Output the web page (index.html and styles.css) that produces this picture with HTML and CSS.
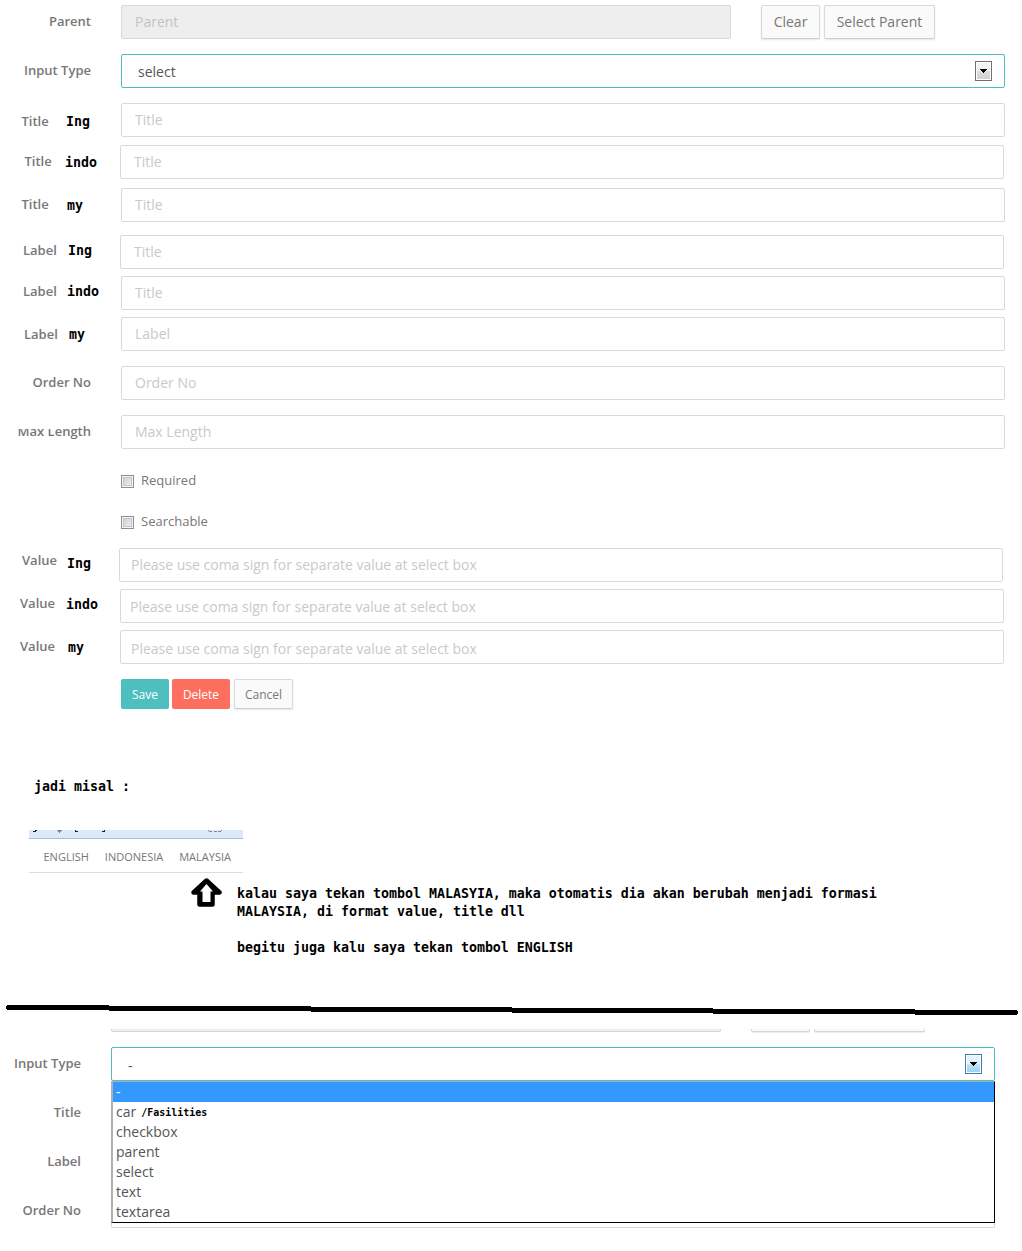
FILE: index.html
```html
<!DOCTYPE html>
<html lang="id">
<head>
<meta charset="utf-8">
<title>Form attribute notes</title>
<link rel="stylesheet" href="styles.css">
</head>
<body>
<main class="page">
  <form class="form">
    <div class="row parent-row">
      <label class="label"><span class="name">Parent</span></label>
      <input class="field disabled" placeholder="Parent" disabled>
      <div class="parent-actions">
        <button type="button" class="btn">Clear</button>
        <button type="button" class="btn">Select Parent</button>
      </div>
    </div>
    <div class="row wide-gap">
      <label class="label"><span class="name">Input Type</span></label>
      <div class="field select"><span>select</span><i class="arrow"><svg width="7" height="4" viewBox="0 0 7 4" shape-rendering="crispEdges"><path d="M0 0h7v1H6v1H5v1H4v1H3V3H2V2H1V1H0z"/></svg></i></div>
    </div>
    <div class="row wide-gap tagged title-ing">
      <label class="label"><span class="name">Title</span><b class="tag">Ing</b></label>
      <input class="field" placeholder="Title">
    </div>
    <div class="row tagged title-indo">
      <label class="label"><span class="name">Title</span><b class="tag">indo</b></label>
      <input class="field" placeholder="Title">
    </div>
    <div class="row tagged title-my">
      <label class="label"><span class="name">Title</span><b class="tag">my</b></label>
      <input class="field" placeholder="Title">
    </div>
    <div class="row tagged label-ing">
      <label class="label"><span class="name">Label</span><b class="tag">Ing</b></label>
      <input class="field" placeholder="Title">
    </div>
    <div class="row tagged label-indo">
      <label class="label"><span class="name">Label</span><b class="tag">indo</b></label>
      <input class="field" placeholder="Title">
    </div>
    <div class="row tagged label-my">
      <label class="label"><span class="name">Label</span><b class="tag">my</b></label>
      <input class="field" placeholder="Label">
    </div>
    <div class="row wide-gap">
      <label class="label"><span class="name">Order No</span></label>
      <input class="field" placeholder="Order No">
    </div>
    <div class="row wide-gap">
      <label class="label clipped"><span class="name">Max Length</span></label>
      <input class="field" placeholder="Max Length">
    </div>
    <div class="checks">
      <label class="check"><i class="box"></i>Required</label>
      <label class="check"><i class="box"></i>Searchable</label>
    </div>
    <div class="row tagged value-ing">
      <label class="label"><span class="name">Value</span><b class="tag">Ing</b></label>
      <input class="field" placeholder="Please use coma sign for separate value at select box">
    </div>
    <div class="row tagged value-indo">
      <label class="label"><span class="name">Value</span><b class="tag">indo</b></label>
      <input class="field" placeholder="Please use coma sign for separate value at select box">
    </div>
    <div class="row tagged value-my">
      <label class="label"><span class="name">Value</span><b class="tag">my</b></label>
      <input class="field" placeholder="Please use coma sign for separate value at select box">
    </div>
    <div class="actions">
      <button type="button" class="btn small save">Save</button>
      <button type="button" class="btn small delete">Delete</button>
      <button type="button" class="btn small cancel">Cancel</button>
    </div>
  </form>

  <section class="notes">
    <p class="note intro">jadi misal :</p>
    <div class="lang-bar">
      <svg class="lang-top" width="214" height="9" viewBox="0 0 214 9" shape-rendering="crispEdges">
        <path fill="#dbe9f8" d="M0 0h214v8H0z"/>
        <path fill="#a5bcd6" d="M0 8h214v1H0z"/>
        <path fill="#222" d="M6 0h2v1H6zM4 1h3v1H4zM46 0h1v1h2v1h-3zM75 0h1v2h-3v-1h2z"/>
        <path fill="#888" d="M28 0h5v1h-1v1h-1v1h-1v-1h-1v-1h-1zM179 0h1v1h-1zM180 1h3v1h-3zM185 1h3v1h-3zM189 1h3v1h-3zM192 0h1v1h-1z"/>
      </svg>
      <nav class="langs"><span>ENGLISH</span><span>INDONESIA</span><span>MALAYSIA</span></nav>
    </div>
    <div class="explain">
      <svg class="up-arrow" width="31" height="30" viewBox="0 0 31 30"><path d="M15.500 2.500L28.500 14.500H21.500V26.500H8.500V14.500H2.500z" fill="#000" stroke="#000" stroke-width="4.500" stroke-linejoin="round"/><path d="M15.500 6L22 13.500H19.500V24H11.500V13.500H9z" fill="#fff"/></svg>
      <p class="note">kalau saya tekan tombol MALASYIA, maka otomatis dia akan berubah menjadi formasi<br>MALAYSIA, di format value, title dll<br><br>begitu juga kalu saya tekan tombol ENGLISH</p>
    </div>
  </section>

  <svg class="divider" width="1012" height="11" viewBox="0 0 1012 11" shape-rendering="crispEdges"><path d="M1 0H103V1H305V2H506V3H707V4H909V5H1011V6H1012V9H1011V10H909V9H707V8H506V7H305V6H103V5H1V4H0V1H1z"/></svg>

  <section class="second">
    <div class="cut-row"><i class="cut grey"></i><i class="cut clear"></i><i class="cut pick"></i></div>
    <div class="example">
      <div class="side-labels"><span>Input Type</span><span>Title</span><span>Label</span><span>Order No</span></div>
      <div class="combo">
        <div class="field select open"><span>-</span><i class="arrow blue"><svg width="7" height="4" viewBox="0 0 7 4" shape-rendering="crispEdges"><path d="M0 0h7v1H6v1H5v1H4v1H3V3H2V2H1V1H0z"/></svg></i></div>
        <ul class="options">
          <li class="active">-</li>
          <li>car<b class="tag tiny">/Fasilities</b></li>
          <li>checkbox</li>
          <li>parent</li>
          <li>select</li>
          <li>text</li>
          <li>textarea</li>
        </ul>
        <div class="field-end"></div>
      </div>
    </div>
  </section>
</main>
</body>
</html>
```
FILE: styles.css
```css
* { box-sizing: border-box; }
body {
  margin: 0;
  background: #fff;
  color: #777;
  font-family: "Open Sans", sans-serif;
  font-size: 13px;
}
.page { width: 1022px; height: 1251px; overflow: hidden; padding-top: 5px; }
.form { display: flex; flex-direction: column; }

.row {
  --field-x: 121px;
  --name-y: -1px;
  --tag-y: 1px;
  display: grid;
  grid-template-columns: var(--field-x) 884px;
  height: 34px;
}
.parent-row { grid-template-columns: 121px 610px auto; }
.wide-gap { margin-top: 15px; }
.label {
  display: flex;
  align-items: flex-start;
  justify-content: flex-end;
  padding-right: 30px;
  line-height: 34px;
  white-space: nowrap;
}
.name { margin-top: var(--name-y); font-weight: 600; }
.tagged .label { justify-content: flex-start; padding: 0 0 0 var(--name-x); }
.tagged .name { width: calc(var(--tag-x) - var(--name-x)); }
.tag {
  margin-top: var(--tag-y);
  color: #000;
  font: bold 13.290px/34px "DejaVu Sans Mono", monospace;
}

.title-ing { --name-x: 21.500px; --tag-x: 66px; --name-y: 1px; --tag-y: 2px; }
.title-indo { --name-x: 24.500px; --tag-x: 65px; --field-x: 120px; margin-top: 8px; }
.title-my { --name-x: 21.500px; --tag-x: 67px; margin-top: 9px; }
.label-ing { --name-x: 23px; --tag-x: 68px; --field-x: 120px; --name-y: -2px; --tag-y: -1px; margin-top: 13px; }
.label-indo { --name-x: 23px; --tag-x: 67px; --name-y: -2px; --tag-y: -1px; margin-top: 7px; }
.label-my { --name-x: 24px; --tag-x: 69px; --name-y: 0px; margin-top: 7px; }
.value-ing { --name-x: 22px; --tag-x: 67px; --field-x: 119px; --name-y: -5px; --tag-y: -1px; margin-top: 17px; }
.value-indo { --name-x: 20px; --tag-x: 66px; --field-x: 120px; --name-y: -3px; --tag-y: -1px; margin-top: 7px; }
.value-my { --name-x: 20px; --tag-x: 68px; --field-x: 120px; margin-top: 7px; }

.clipped { position: relative; }
.clipped::before {
  content: "";
  position: absolute;
  left: 0;
  top: 0;
  width: 63px;
  height: 14px;
  background: #fff;
}

.field {
  width: 100%;
  height: 34px;
  margin: 0;
  padding: 0 13px 2px;
  border: 1px solid #d9d9d9;
  border-radius: 2px;
  background: #fff;
  color: #555;
  font: 14px "Open Sans", sans-serif;
  outline: 0;
}
.field::placeholder { color: #c9c9c9; opacity: 1; }
.disabled { background: #eee; }
.disabled::placeholder { color: #c3c3c3; }
.value-ing .field { padding-left: 11px; }
.value-indo .field { padding: 2px 9px; }
.value-my .field { padding: 4px 10px 2px; }

.select {
  display: flex;
  align-items: center;
  justify-content: space-between;
  padding: 1px 12px 0 16px;
  border-color: #4dbfbf;
}
.arrow {
  display: flex;
  align-items: center;
  justify-content: center;
  width: 17px;
  height: 20px;
  margin-top: -1px;
  border: 1px solid #707070;
  box-shadow: inset 0 0 0 1px #fff;
  background: linear-gradient(#f2f2f2 0 50%, #dedede 50%, #cfcfcf);
}
.arrow.blue { border-color: #3c7fb1; background: linear-gradient(#e5f4fc 0 50%, #c4e5f6 50%, #98d1ef); }

.parent-actions { display: flex; gap: 4px; padding-left: 30px; }
.btn {
  height: 34px;
  padding: 0 0 2px;
  border: 1px solid #d9d9d9;
  border-bottom-color: #ccc;
  border-radius: 2px;
  background: #fafafa;
  box-shadow: 0 1px 2px rgba(0, 0, 0, .1);
  color: #777;
  font: 14px "Open Sans", sans-serif;
}
.parent-actions .btn { width: 59px; }
.parent-actions .btn + .btn { width: 111px; }

.checks { display: flex; flex-direction: column; gap: 21px; padding: 21px 0 0 121px; }
.check { display: flex; align-items: center; gap: 7px; height: 20px; line-height: 20px; }
.box {
  width: 13px;
  height: 13px;
  margin-top: 3px;
  border: 1px solid #8e8f8f;
  box-shadow: inset 0 0 0 1px #f4f4f4, inset 0 0 0 2px #c3c5c8;
  background: linear-gradient(135deg, #c5c8d0, #f6f6f6);
}

.actions { display: flex; padding: 15px 0 0 121px; }
.small { height: 30px; padding: 0; font-size: 12px; }
.save, .delete { border: 0; box-shadow: none; color: #fff; }
.save { width: 48px; margin-right: 3px; background: #4dbfbf; }
.delete { width: 58px; margin-right: 4px; background: #fc6e5d; }
.cancel { width: 59px; }

.note { margin: 0; color: #000; font: bold 13.290px/18px "DejaVu Sans Mono", monospace; }
.intro { padding: 69px 0 0 34px; }
.lang-bar { width: 214px; height: 43px; margin: 34px 0 0 29px; border-bottom: 1px solid #ddd; }
.lang-top { display: block; }
.langs { display: flex; gap: 16px; padding-left: 14.500px; font-size: 11px; line-height: 36px; }
.explain { display: flex; align-items: flex-start; gap: 15px; padding: 5px 0 0 191px; }
.explain .note { margin-top: 7px; white-space: nowrap; }
.up-arrow { flex: none; }
.divider { display: block; margin: 48px 0 0 6px; }

.second { padding-top: 13px; }
.cut-row { display: flex; height: 3px; padding-left: 111px; }
.cut {
  height: 3px;
  border: 1px solid #d5d5d5;
  border-top: 0;
  border-radius: 0 0 2px 2px;
  background: #fafafa;
  box-shadow: 0 1px 1px rgba(0, 0, 0, .08);
}
.grey { width: 610px; background: #eee; box-shadow: none; }
.clear { width: 59px; margin-left: 30px; }
.pick { width: 111px; margin-left: 4px; }
.example { display: grid; grid-template-columns: 111px 884px; margin-top: 15px; }
.side-labels {
  display: flex;
  flex-direction: column;
  gap: 15px;
  margin-top: -1px;
  padding-right: 30px;
  font-weight: 600;
  line-height: 34px;
  text-align: right;
}
.open { padding-top: 3px; }
.open .arrow { margin-top: -3px; }
.options {
  height: 142px;
  margin: 0;
  padding: 0;
  border: 1px solid #000;
  border-top-color: #b0b0b0;
  border-left: 2px solid #b0b0b0;
  color: #555;
  font-size: 14px;
  line-height: 20px;
  list-style: none;
}
.options li { display: flex; height: 20px; padding-left: 3px; }
.options .active { background: #3399ff; color: #fff; }
.tiny { margin: 1px 0 0 5px; font-size: 9.970px; line-height: 20px; }
.field-end { height: 5px; border: 1px solid #d9d9d9; border-top: 0; border-radius: 0 0 2px 2px; }
```
